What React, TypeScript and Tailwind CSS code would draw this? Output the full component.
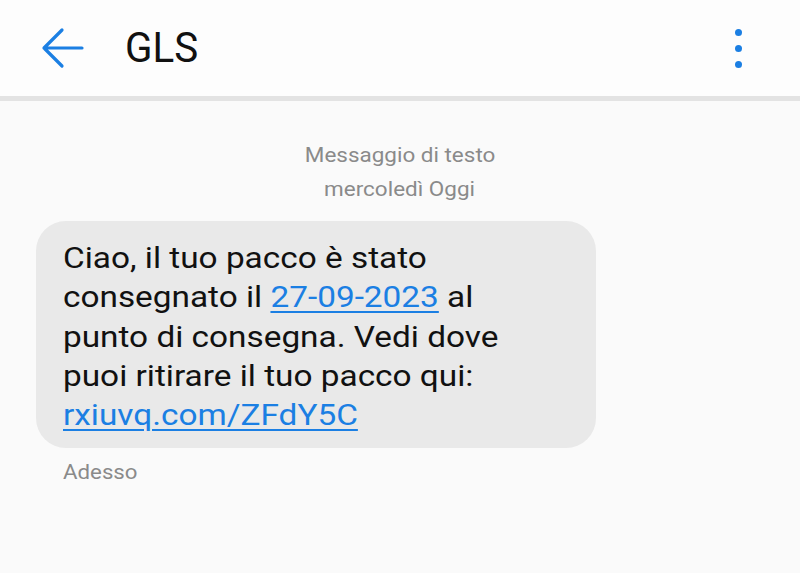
import React from "react";

export default function App() {
  return (
    <div className="w-[800px] h-[573px] bg-[#fafafa] flex flex-col overflow-hidden" style={{ fontFamily: "Roboto, sans-serif" }}>
      <div className="h-[96px] bg-[#fdfdfd] flex items-center shrink-0">
        <div className="w-[125px] flex items-center pl-[40px]">
          <svg width="44" height="42" viewBox="0 0 44 42" fill="none">
            <path d="M42 21H4M22 3L4 21L22 39" stroke="#1b7fe3" strokeWidth="3.2" strokeLinecap="round" strokeLinejoin="round" />
          </svg>
        </div>
        <div className="text-[42px] text-[#111] leading-none origin-left scale-x-[0.96]">GLS</div>
        <div className="ml-auto mr-[58px] flex flex-col gap-[9px]">
          <div className="w-[7px] h-[7px] rounded-full bg-[#1b7fe3]" />
          <div className="w-[7px] h-[7px] rounded-full bg-[#1b7fe3]" />
          <div className="w-[7px] h-[7px] rounded-full bg-[#1b7fe3]" />
        </div>
      </div>
      <div className="h-[5px] bg-[#e3e3e3] shrink-0" />
      <div className="flex flex-col items-center pt-[37px] text-[21px] leading-[34px] text-[#8a8a8a]">
        <div className="scale-x-[1.07]">Messaggio di testo</div>
        <div className="scale-x-[1.07]">mercoledì Oggi</div>
      </div>
      <div className="pl-[36px] pt-[15px]">
        <div className="w-[560px] bg-[#e9e9e9] rounded-[30px] pl-[27px] pr-[20px] pt-[18px] pb-[13px] text-[29px] leading-[39.3px] text-[#111]">
          <div className="inline-block origin-left scale-x-[1.15] whitespace-nowrap">
            Ciao, il tuo pacco è stato<br />
            consegnato il <span className="text-[#1b7fe3] underline underline-offset-[4px] decoration-[1.5px]">27-09-2023</span> al<br />
            punto di consegna. Vedi dove<br />
            puoi ritirare il tuo pacco qui:<br />
            <span className="text-[#1b7fe3] underline underline-offset-[4px] decoration-[1.5px]">rxiuvq.com/ZFdY5C</span>
          </div>
        </div>
        <div className="pl-[27px] pt-[9px]">
          <div className="inline-block text-[21px] text-[#8a8a8a] origin-left scale-x-[1.06]">Adesso</div>
        </div>
      </div>
    </div>
  );
}
